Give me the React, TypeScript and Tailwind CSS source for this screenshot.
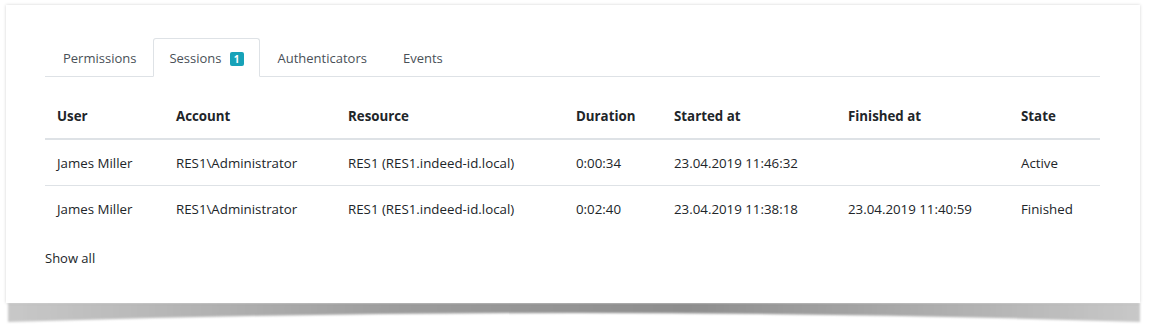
import React from "react";

const tabs = [
  { label: "Permissions", cls: "pl-[17px] pr-[16px]" },
  { label: "Sessions", badge: 1, active: true, cls: "px-[15px]" },
  { label: "Authenticators", cls: "px-[17px]" },
  { label: "Events", cls: "px-[17px]" },
];

const cols = [
  { key: "user", label: "User", w: "w-[119px]" },
  { key: "account", label: "Account", w: "w-[172px]" },
  { key: "resource", label: "Resource", w: "w-[228px]" },
  { key: "duration", label: "Duration", w: "w-[98px]" },
  { key: "started", label: "Started at", w: "w-[174px]" },
  { key: "finished", label: "Finished at", w: "w-[173px]" },
  { key: "state", label: "State", w: "" },
];

const rows = [
  {
    user: "James Miller",
    account: "RES1\\Administrator",
    resource: "RES1 (RES1.indeed-id.local)",
    duration: "0:00:34",
    started: "23.04.2019 11:46:32",
    finished: "",
    state: "Active",
  },
  {
    user: "James Miller",
    account: "RES1\\Administrator",
    resource: "RES1 (RES1.indeed-id.local)",
    duration: "0:02:40",
    started: "23.04.2019 11:38:18",
    finished: "23.04.2019 11:40:59",
    state: "Finished",
  },
];

function CurlShadow() {
  return (
    <svg className="absolute left-0 top-full" width="1136" height="22" viewBox="0 0 1136 22">
      <defs>
        <linearGradient id="sh-x" x1="0" x2="1" y1="0" y2="0">
          <stop offset="0" stopColor="#c8c8c8" />
          <stop offset="0.35" stopColor="#9c9c9c" />
          <stop offset="0.6" stopColor="#8e8e8e" />
          <stop offset="1" stopColor="#c8c8c8" />
        </linearGradient>
        <filter id="sh-blur" x="-5%" y="-50%" width="110%" height="200%">
          <feGaussianBlur stdDeviation="0.8" />
        </filter>
      </defs>
      <path d="M2 0 H1134 V19 Q568 1 2 19 Z" fill="url(#sh-x)" filter="url(#sh-blur)" />
    </svg>
  );
}

export default function App() {
  return (
    <div className="w-[1154px] h-[333px] bg-white pt-[5px] pl-[6px] font-['Open_Sans',sans-serif] text-[13px] text-[#212529]">
      <div className="relative w-[1134px] h-[298px]">
        <CurlShadow />
        <div className="relative h-full bg-white shadow-[0_0_3px_rgba(0,0,0,0.18)] pl-[39px] pr-[40px] pt-[33px]">
          <div className="flex border-b border-[#dee2e6] h-[39px]">
            {tabs.map((t) => (
              <div
                key={t.label}
                className={`flex items-center gap-2 pt-[2px] -mb-px border text-[#495057] ${t.cls} ${
                  t.active ? "border-[#dee2e6] border-b-white rounded-t-[3px] bg-white" : "border-transparent"
                }`}
              >
                <span>{t.label}</span>
                {t.badge ? (
                  <span className="inline-flex items-center justify-center w-[14px] h-[14px] rounded-[2px] bg-[#17a2b8] text-white text-[10px] font-bold leading-none">
                    {t.badge}
                  </span>
                ) : null}
              </div>
            ))}
          </div>
          <table className="mt-[17px] w-full border-collapse text-[13.3px]">
            <thead>
              <tr className="border-b-2 border-[#dee2e6]">
                {cols.map((c) => (
                  <th key={c.key} className={`${c.w} h-[45px] pl-3 pt-[2px] text-left font-bold align-middle`}>
                    {c.label}
                  </th>
                ))}
              </tr>
            </thead>
            <tbody>
              {rows.map((r, i) => (
                <tr key={i} className={i === 0 ? "border-b border-[#dee2e6]" : ""}>
                  {cols.map((c) => (
                    <td key={c.key} className="h-[46px] pl-3 pt-[4px] align-middle">
                      {r[c.key as keyof typeof r]}
                    </td>
                  ))}
                </tr>
              ))}
            </tbody>
          </table>
          <div className="mt-[17px] h-[20px] leading-[20px]">Show all</div>
        </div>
      </div>
    </div>
  );
}
